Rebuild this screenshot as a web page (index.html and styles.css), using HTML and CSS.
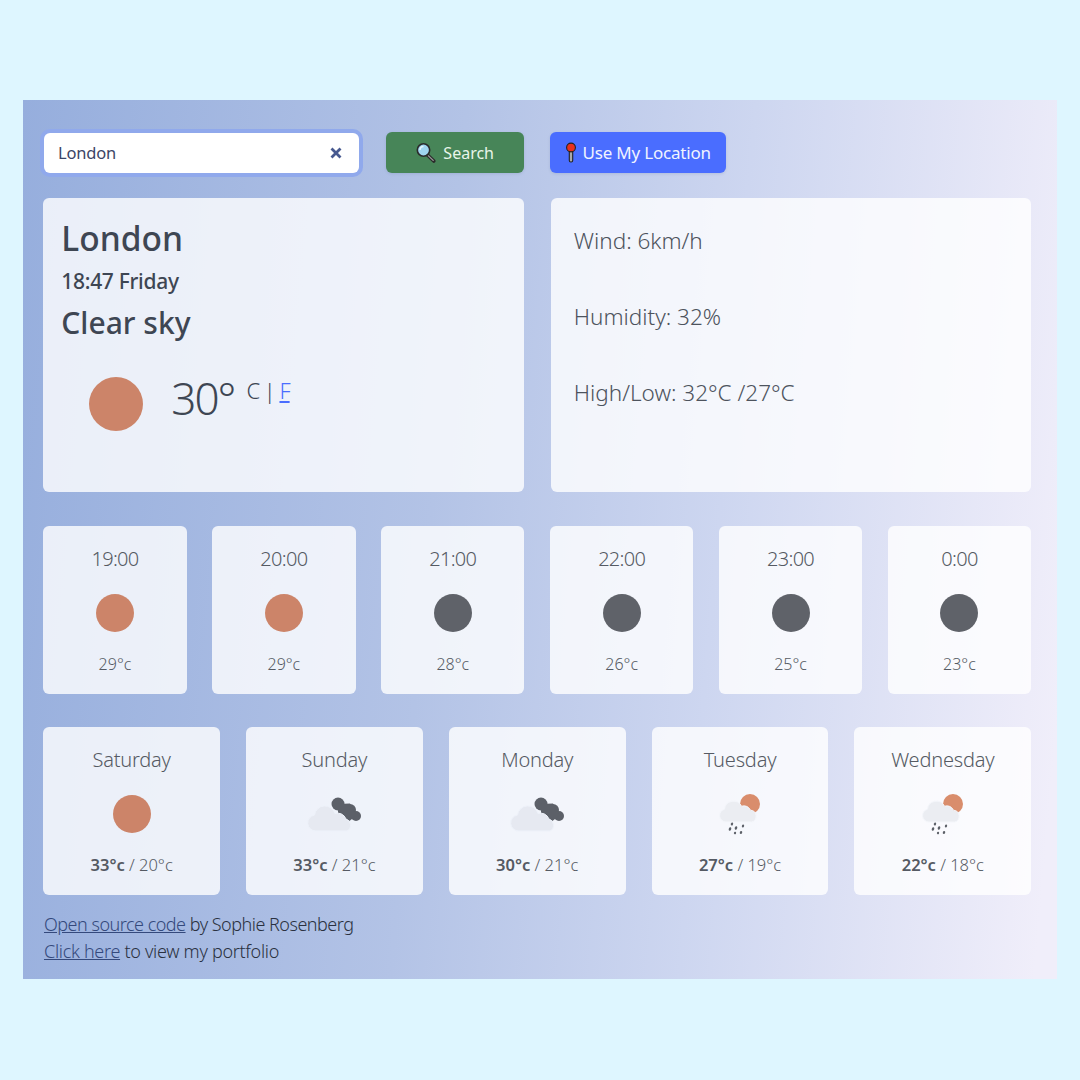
FILE: index.html
```html
<!DOCTYPE html>
<html lang="en">
<head>
    <meta charset="UTF-8">
    <meta name="viewport" content="width=device-width, initial-scale=1.0">
    <title>Weather App</title>
    <link rel="stylesheet" href="styles.css">
</head>
<body>
    <div class="app">
        <form class="search-bar">
            <div class="search-box">
                <span class="search-value">London</span>
                <svg class="clear-icon" width="12" height="12" viewBox="0 0 12 12"><path d="M1.5 1.5l9 9M10.500 1.500l-9 9" stroke="#47598f" stroke-width="2.800" fill="none"/></svg>
            </div>
            <button type="button" class="btn btn-search">
                <svg width="21" height="21" viewBox="0 0 21 21">
                    <path d="M12.500 13l6.300 6" stroke="#2b2b2b" stroke-width="3.600" stroke-linecap="round"/>
                    <path d="M13.200 13.600l5 4.800" stroke="#9a9a9a" stroke-width="1.300" stroke-linecap="round"/>
                    <circle cx="8.500" cy="8" r="6.200" fill="#9fd4ef" stroke="#2b2b2b" stroke-width="1.600"/>
                    <path d="M5 8a3.600 3.600 0 0 1 3.500-3.600" stroke="#e4f5fc" stroke-width="1.500" fill="none"/>
                </svg>
                Search
            </button>
            <button type="button" class="btn btn-location">
                <svg width="12" height="21" viewBox="0 0 12 21">
                    <rect x="4.300" y="7" width="3.400" height="13" rx="1.500" fill="#a9a9a9" stroke="#222" stroke-width="1.100"/>
                    <circle cx="6" cy="5.500" r="4.400" fill="#e9301c" stroke="#222" stroke-width="1.100"/>
                </svg>
                Use My Location
            </button>
        </form>

        <div class="today">
            <div class="card today-main">
                <h1>London</h1>
                <div class="today-time">18:47 Friday</div>
                <h2>Clear sky</h2>
                <div class="today-temp">
                    <span class="sun sun-large"></span>
                    <span class="temp-value">30°</span>
                    <span class="temp-units">C | <a href="#">F</a></span>
                </div>
            </div>
            <div class="card today-details">
                <div>Wind: 6km/h</div>
                <div>Humidity: 32%</div>
                <div>High/Low: 32°C /27°C</div>
            </div>
        </div>

        <div class="hours">
            <div class="card forecast"><div class="forecast-title">19:00</div><div class="forecast-icon"><span class="sun"></span></div><div class="forecast-temp">29°c</div></div>
            <div class="card forecast"><div class="forecast-title">20:00</div><div class="forecast-icon"><span class="sun"></span></div><div class="forecast-temp">29°c</div></div>
            <div class="card forecast"><div class="forecast-title">21:00</div><div class="forecast-icon"><span class="moon"></span></div><div class="forecast-temp">28°c</div></div>
            <div class="card forecast"><div class="forecast-title">22:00</div><div class="forecast-icon"><span class="moon"></span></div><div class="forecast-temp">26°c</div></div>
            <div class="card forecast"><div class="forecast-title">23:00</div><div class="forecast-icon"><span class="moon"></span></div><div class="forecast-temp">25°c</div></div>
            <div class="card forecast"><div class="forecast-title">0:00</div><div class="forecast-icon"><span class="moon"></span></div><div class="forecast-temp">23°c</div></div>
        </div>

        <svg class="icon-defs" width="0" height="0">
            <defs>
                <symbol id="clouds" viewBox="0 0 56 40">
                    <g fill="#5c6068">
                        <circle cx="32" cy="10" r="6.500"/>
                        <circle cx="44" cy="16" r="6"/>
                        <circle cx="50" cy="22" r="5"/>
                        <path d="M32 10l12-.5 6 12.500-8 6-10-8z"/>
                    </g>
                    <path d="M10 37a8 8 0 0 1-1.500-15.900a10.500 10.500 0 0 1 20.500-1.600a9 9 0 0 1 11 5.500a6.500 6.500 0 0 1 1 12z" fill="#e6e9f1" stroke="#eef2fa" stroke-width="1"/>
                </symbol>
                <symbol id="rain" viewBox="0 0 44 44">
                    <circle cx="32" cy="12" r="10" fill="#d98d6c"/>
                    <path d="M8 30a6.500 6.500 0 0 1-1.500-12.800a9 9 0 0 1 17-3a8 8 0 0 1 9 4a6 6 0 0 1 1 11.800z" fill="#ebedf2" stroke="#f4f6fb" stroke-width="1"/>
                    <g fill="#5c6068">
                        <ellipse cx="14" cy="32" rx="1.100" ry="1.600" transform="rotate(20 14 32)"/>
                        <ellipse cx="12" cy="37" rx="1.200" ry="1.900" transform="rotate(20 12 37)"/>
                        <ellipse cx="18" cy="36" rx="1.200" ry="1.900" transform="rotate(20 18 36)"/>
                        <ellipse cx="25" cy="34" rx="1.100" ry="1.500" transform="rotate(20 25 34)"/>
                        <ellipse cx="17" cy="41" rx="1.100" ry="1.300" transform="rotate(20 17 41)"/>
                        <ellipse cx="23" cy="40.500" rx="1.200" ry="1.500" transform="rotate(20 23 40.500)"/>
                    </g>
                </symbol>
            </defs>
        </svg>

        <div class="days">
            <div class="card forecast"><div class="forecast-title">Saturday</div><div class="forecast-icon"><span class="sun"></span></div><div class="forecast-temp"><strong>33°c</strong> / 20°c</div></div>
            <div class="card forecast"><div class="forecast-title">Sunday</div><div class="forecast-icon"><svg class="icon-clouds"><use href="#clouds"/></svg></div><div class="forecast-temp"><strong>33°c</strong> / 21°c</div></div>
            <div class="card forecast"><div class="forecast-title">Monday</div><div class="forecast-icon"><svg class="icon-clouds"><use href="#clouds"/></svg></div><div class="forecast-temp"><strong>30°c</strong> / 21°c</div></div>
            <div class="card forecast"><div class="forecast-title">Tuesday</div><div class="forecast-icon"><svg class="icon-rain"><use href="#rain"/></svg></div><div class="forecast-temp"><strong>27°c</strong> / 19°c</div></div>
            <div class="card forecast"><div class="forecast-title">Wednesday</div><div class="forecast-icon"><svg class="icon-rain"><use href="#rain"/></svg></div><div class="forecast-temp"><strong>22°c</strong> / 18°c</div></div>
        </div>

        <footer class="footer">
            <div><a href="#">Open source code</a> by Sophie Rosenberg</div>
            <div class="footer-portfolio"><a href="#">Click here</a> to view my portfolio</div>
        </footer>
    </div>
</body>
</html>
```
FILE: styles.css
```css
body {
    margin: 0;
    height: 1080px;
    background: #def6ff;
    font-family: "Noto Sans", "Open Sans", sans-serif;
    font-size: 18px;
    line-height: 27px;
    color: #3e4653;
    padding: 100px 23px 0;
    box-sizing: border-box;
}
.app {
    height: 879px;
    box-sizing: border-box;
    padding: 32px 25.800px 0 20.300px;
    background: linear-gradient(95deg, #96aedd 0%, #b3c3e6 40%, #cdd6f0 66%, #f0eefa 98%);
}
.card {
    background: rgba(255, 255, 255, 0.8);
    border-radius: 6px;
}

/* search row */
.search-bar {
    display: flex;
    align-items: center;
    height: 41px;
    margin-bottom: 25px;
}
.search-box {
    width: 315px;
    height: 40px;
    box-sizing: border-box;
    margin: 0 26.700px 0 0.700px;
    padding: 0 17px 0 14px;
    display: flex;
    align-items: center;
    justify-content: space-between;
    background: white;
    box-shadow: 0 0 0 4px #90a9ec;
    border-radius: 6px;
    color: #3b4566;
    font-size: 16.500px;
}
.search-value {
    letter-spacing: -0.2px;
}
.btn {
    height: 41px;
    border: none;
    border-radius: 6px;
    display: flex;
    align-items: center;
    justify-content: center;
    font-family: inherit;
    font-size: 16px;
    padding: 0;
    box-shadow: 0 1px 3px rgba(60, 80, 130, 0.15);
}
.btn-search {
    width: 138px;
    gap: 7px;
    margin-right: 26px;
    background: #478558;
    color: #e9f5ea;
}
.btn-location {
    width: 176px;
    gap: 6px;
    background: #4a6dff;
    color: #f0f3ff;
    font-size: 17px;
    letter-spacing: -0.2px;
}

/* today */
.today {
    display: grid;
    grid-template-columns: 1fr 1fr;
    column-gap: 27px;
    margin-bottom: 34px;
}
.today-main {
    height: 294px;
    box-sizing: border-box;
    padding: 18px 18px 0;
}
h1 {
    margin: 0;
    font-size: 33.500px;
    line-height: 44px;
    font-weight: 500;
}
.today-time {
    font-size: 21px;
    line-height: 30px;
    margin-top: 6px;
    font-weight: 500;
    letter-spacing: -0.3px;
}
h2 {
    margin: 6px 0 0;
    font-size: 30px;
    line-height: 42px;
    font-weight: 500;
}
.today-temp {
    display: flex;
    align-items: flex-start;
    margin: 28px 0 0 28px;
}
.temp-value {
    margin: -1px 0 0 28px;
    font-size: 44px;
    line-height: 54px;
    font-weight: 300;
    letter-spacing: -2px;
}
.temp-units {
    margin: 2px 0 0 12px;
    font-size: 22px;
    line-height: 32px;
    font-weight: 300;
    letter-spacing: -1px;
}
.temp-units a {
    color: #4a6dff;
}
.today-details {
    box-sizing: border-box;
    padding: 26px 23px 0;
    font-size: 22.500px;
    line-height: 33px;
    font-weight: 300;
    color: #4d535d;
}
.today-details div {
    margin-bottom: 43px;
}

/* forecasts */
.hours {
    display: grid;
    grid-template-columns: repeat(6, 143.400px);
    justify-content: space-between;
    margin-bottom: 33px;
}
.hours .forecast-title {
    letter-spacing: -0.7px;
}
.days {
    display: grid;
    grid-template-columns: repeat(5, 176.700px);
    justify-content: space-between;
    margin-bottom: 16px;
}
.days .forecast-title {
    letter-spacing: -0.2px;
}
.days .forecast-temp {
    font-size: 16.500px;
}
.forecast {
    height: 168px;
    box-sizing: border-box;
    padding-top: 18px;
    display: flex;
    flex-direction: column;
    align-items: center;
    color: #555a63;
    font-weight: 300;
}
.forecast-title {
    font-size: 20px;
    line-height: 30px;
}
.forecast-icon {
    height: 38px;
    margin-top: 20px;
    display: flex;
    align-items: center;
    justify-content: center;
}
.forecast-temp {
    margin-top: 20px;
    font-size: 16px;
    line-height: 24px;
}
.forecast-temp strong {
    font-weight: 600;
}
.sun,
.moon {
    display: block;
    width: 38px;
    height: 38px;
    border-radius: 50%;
    background: #cc8469;
}
.moon {
    background: #5f6269;
}
.sun-large {
    width: 54px;
    height: 54px;
    margin-top: 5px;
    flex-shrink: 0;
}
.icon-defs {
    position: absolute;
}
.icon-clouds {
    width: 56px;
    height: 40px;
    flex-shrink: 0;
}
.icon-rain {
    width: 44px;
    height: 44px;
    flex-shrink: 0;
}

.footer {
    margin-left: 0.700px;
    font-size: 18px;
    line-height: 27px;
    font-weight: 300;
    letter-spacing: -0.5px;
    color: #2a3140;
}
.footer a {
    color: #34497c;
}
.footer-portfolio {
    letter-spacing: -0.3px;
}
```
